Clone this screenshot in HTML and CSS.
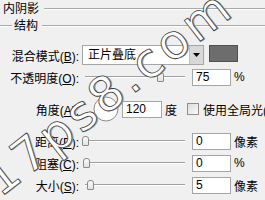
FILE: index.html
```html
<!DOCTYPE html>
<html lang="zh">
<head>
<meta charset="utf-8">
<link rel="stylesheet" href="styles.css">
</head>
<body>
<div class="dlg">
  <div class="legend l1"><span class="lt">内阴影</span><span class="rule"></span></div>
  <div class="legend l2"><span class="rule short"></span><span class="lt">结构</span><span class="rule"></span></div>

  <div class="row r-blend">
    <span class="lbl">混合模式(<u>B</u>):</span>
    <div class="select">
      <span class="sel-text">正片叠底</span>
      <span class="sel-btn"><svg width="7" height="4" viewBox="0 0 7 4"><path d="M0 0H7L3.5 4Z" fill="#000"/></svg></span>
    </div>
    <div class="swatch"></div>
  </div>

  <div class="row r-opacity">
    <span class="lbl">不透明度(<u>O</u>):</span>
    <div class="slider"><div class="track"></div><span class="thumb" style="left:75px"></span></div>
    <div class="num">75</div><span class="unit">%</span>
  </div>

  <div class="row r-angle">
    <span class="lbl">角度(<u>A</u>):</span>
    <div class="dial"><svg width="26" height="26" viewBox="0 0 26 26"><circle cx="13" cy="13" r="12" fill="#fff" stroke="#8c8c8c"/><path d="M13 13L7 3" stroke="#000" stroke-width="1"/></svg></div>
    <div class="num wide">120</div><span class="unit">度</span>
    <span class="check"></span><span class="chk-lbl">使用全局光(<u>G</u>)</span>
  </div>

  <div class="row r-slide">
    <span class="lbl">距离(<u>D</u>):</span>
    <div class="slider"><div class="track"></div><span class="thumb" style="left:0px"></span></div>
    <div class="num">0</div><span class="unit">像素</span>
  </div>

  <div class="row r-slide">
    <span class="lbl">阻塞(<u>C</u>):</span>
    <div class="slider"><div class="track"></div><span class="thumb" style="left:1px"></span></div>
    <div class="num">0</div><span class="unit">%</span>
  </div>

  <div class="row r-slide">
    <span class="lbl">大小(<u>S</u>):</span>
    <div class="slider"><div class="track"></div><span class="thumb" style="left:5px"></span></div>
    <div class="num">5</div><span class="unit">像素</span>
  </div>

  <div class="watermark">17ps8.com</div>
</div>
</body>
</html>
```

FILE: styles.css
```css
html, body {
  margin: 0;
  padding: 0;
  width: 265px;
  height: 200px;
  overflow: hidden;
  background: #f0f0f0;
}
body {
  font-family: "Liberation Sans", "Noto Sans CJK SC", sans-serif;
  font-size: 12px;
  color: #000;
}
.dlg {
  position: relative;
  width: 265px;
  height: 200px;
  overflow: hidden;
}
u { text-decoration: underline; text-underline-offset: 1px; }

.legend {
  display: flex;
  align-items: center;
}
.l1 { height: 18px; padding-left: 3px; }
.l2 { height: 16px; }
.lt { white-space: nowrap; line-height: 14px; }
.l1 .lt { margin-right: 5px; }
.l2 .lt { margin: 0 4px 0 2px; }
.rule {
  flex: 1;
  height: 0;
  border-top: 1px solid #a9a9a9;
  border-bottom: 1px solid #fff;
}
.rule.short { flex: none; width: 12px; }

.row {
  display: flex;
  align-items: center;
  white-space: nowrap;
}
.lbl {
  flex: none;
  width: 79px;
  text-align: right;
}
.r-blend { margin-top: 11px; height: 21px; }
.r-opacity { height: 22px; }
.r-angle { height: 42px; }
.r-slide { height: 22px; }

.select {
  margin-left: 3px;
  width: 122px;
  height: 20px;
  box-sizing: border-box;
  display: flex;
  border: 1px solid #a5a5a5;
  background: #fff;
  align-self: flex-start;
}
.sel-text {
  flex: 1;
  padding-left: 5px;
  line-height: 18px;
}
.sel-btn {
  width: 13px;
  background: #d8d8d8;
  border-left: 1px solid #c0c0c0;
  display: flex;
  align-items: center;
  justify-content: center;
}
.swatch {
  align-self: flex-start;
  margin-left: 5px;
  width: 29px;
  height: 17px;
  box-sizing: border-box;
  background: #6d6d6d;
  border: 1px solid #505050;
}

.slider {
  position: relative;
  flex: none;
  margin-left: 6px;
  width: 100px;
  height: 12px;
  display: flex;
  align-items: center;
}
.track {
  flex: 1;
  height: 0;
  border-top: 1px solid #a0a0a0;
  border-bottom: 1px solid #fff;
}
.thumb {
  position: absolute;
  top: 1px;
  width: 7px;
  height: 10px;
  margin-left: -3px;
  box-sizing: border-box;
  background: linear-gradient(#fafafa, #e2e2e2);
  border: 1px solid #8a8a8a;
  border-radius: 3px 3px 1px 1px;
}

.num {
  flex: none;
  margin-left: 7px;
  width: 39px;
  height: 17px;
  box-sizing: border-box;
  padding-left: 3px;
  line-height: 15px;
  background: #fff;
  border: 1px solid #a5a5a5;
}
.num.wide { width: 40px; margin-left: 3px; }
.unit { margin-left: 3px; }

.dial {
  margin-left: 14px;
  width: 26px;
  height: 26px;
  display: flex;
}
.check {
  flex: none;
  margin-left: 10px;
  width: 12px;
  height: 12px;
  box-sizing: border-box;
  border: 1px solid #8f8f8f;
  background: linear-gradient(135deg, #dcdcdc, #fafafa);
}
.chk-lbl { margin-left: 4px; }

.watermark {
  position: absolute;
  left: 108px;
  top: 92px;
  transform: translate(-50%, -50%) rotate(-38deg);
  font-family: "DejaVu Sans", sans-serif;
  font-size: 48px;
  letter-spacing: 4px;
  white-space: nowrap;
  color: #fff;
  -webkit-text-stroke: 0.8px #3a3a3a;
  text-shadow: 1px 1px 0 #9a9a9a;
  line-height: 1;
}
```
